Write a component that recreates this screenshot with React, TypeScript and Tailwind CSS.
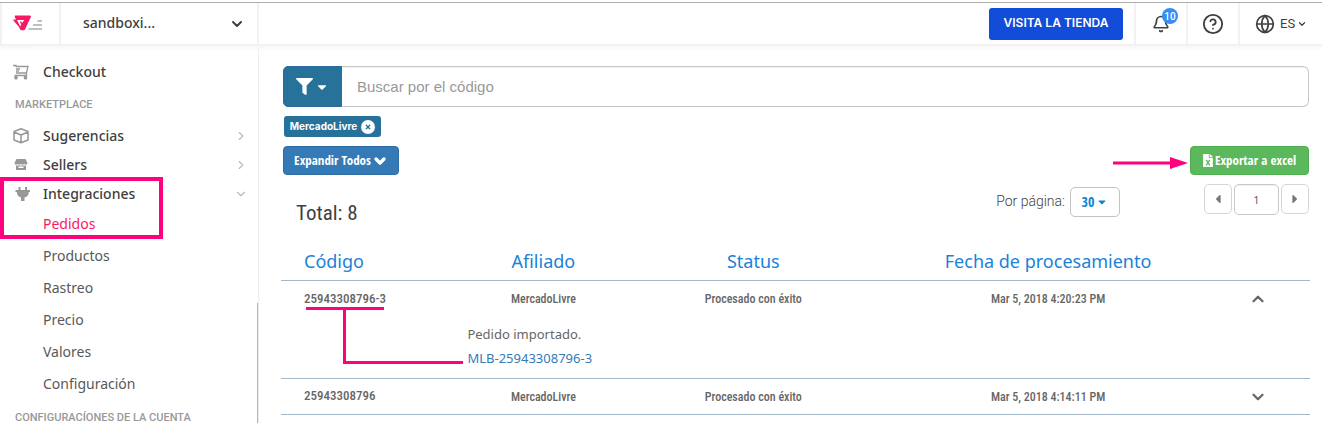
import React from "react";
import { ChevronDown, ChevronUp, ChevronRight, Bell, CircleQuestionMark, Globe } from "lucide-react";
import { FaFilter, FaCaretDown, FaCaretLeft, FaCaretRight, FaFileExcel } from "react-icons/fa";
import { FaCircleXmark } from "react-icons/fa6";

const narrow = "font-['Open_Sans_Condensed','Roboto_Condensed',sans-serif]";
const narrowText = "font-['Roboto_Condensed','Open_Sans_Condensed',sans-serif]";

function Logo() {
  return (
    <svg viewBox="0 0 30 16" className="h-4 w-[30px]" aria-hidden="true">
      <path
        fillRule="evenodd"
        d="M2.500 0.500H16.700q1.800 0 1 1.700L12.200 14q-.7 1.300-1.500 1.300H8.500q-1 0-1.600-1.200L6 12 .4 5.600Q-.2 4.500 1 4.500h2L1.800 2Q1.400.7 2.500.5ZM4 5 7.200 11.500 8.200 9.500 6.800 6.500 8.200 6.500 9 8 11.300 5Z"
        fill="#f71963"
      />
      <path d="M24.500 6h4.500M20 10h9M15.500 14h13.500" stroke="#aaa" strokeWidth="1.500" fill="none" />
    </svg>
  );
}

function CartIcon() {
  return (
    <svg viewBox="0 0 16 16" className="size-4" fill="none" stroke="#979899" strokeWidth="1.300" aria-hidden="true">
      <path d="M0 1.500h3V3M3 2.500H15L13.500 9H3M13.500 9v2.500H1.500M3 5h4M3 7h3" />
      <circle cx="3" cy="13.700" r="1.200" fill="#979899" />
      <circle cx="12.500" cy="13.700" r="1.200" fill="#979899" />
    </svg>
  );
}

function BoxIcon() {
  return (
    <svg viewBox="0 0 16 16" className="size-4" fill="none" stroke="#979899" strokeWidth="1.500" strokeLinejoin="round" aria-hidden="true">
      <path d="M8 .8 15 3.500v8.500L8 14.800 1 12V3.500ZM1 4l7 3 7-3M8 7v8" />
    </svg>
  );
}

function StoreIcon() {
  return (
    <svg viewBox="0 0 14 13" className="ml-px h-[13px] w-3.5" fill="#979899" aria-hidden="true">
      <path d="M2.500 1h9L13.500 5q0 1.800-1.600 1.800-1.100 0-1.600-1-.6 1-1.700 1T7 5.800q-.6 1-1.700 1t-1.600-1q-.5 1-1.600 1Q.5 6.800.5 5Z" />
      <path fillRule="evenodd" d="M2 7.500h10V12H2ZM4.500 8.500v1.500h5V8.500Z" />
    </svg>
  );
}

function PlugIcon() {
  return (
    <svg viewBox="0 0 16 16" className="ml-0.5 size-4" fill="#979899" aria-hidden="true">
      <path d="M3.500 1h2v3h4.500V1h2v3H15v2h-1.200q0 4.500-4.300 5.500V15h-3.500v-3.500Q2 10.500 1.800 6H.5V4h3Z" />
    </svg>
  );
}

const heading = "px-[15px] text-[11px] leading-4 font-medium text-[#979899] whitespace-nowrap font-[Roboto,sans-serif]";

function MenuLink({ icon, label, arrow }: { icon: React.ReactNode; label: string; arrow?: "right" | "down" }) {
  return (
    <a href="#" className="flex h-[29px] items-center pr-2.5 pl-[13px] text-sm font-medium text-[#3f3f40]">
      <span className="flex w-[30px] items-center">{icon}</span>
      <span className="flex-1">{label}</span>
      {arrow === "right" && <ChevronRight className="size-3.5 text-[#bbb]" strokeWidth={2} />}
      {arrow === "down" && <ChevronDown className="size-3.5 text-[#bbb]" strokeWidth={2} />}
    </a>
  );
}

function Sidebar() {
  return (
    <nav className="relative w-[259px] shrink-0 overflow-hidden border-r border-[#eee] font-['Noto_Sans',sans-serif]">
      <div className="flex h-[11px] items-start px-3.5">
        <svg viewBox="0 0 16 2" className="h-0.5 w-4" aria-hidden="true">
          <path d="M0 .5h3M5 .5h10" stroke="#979899" />
        </svg>
      </div>
      <MenuLink icon={<CartIcon />} label="Checkout" />
      <h2 className={`${heading} mt-[11px] mb-2`}>MARKETPLACE</h2>
      <MenuLink icon={<BoxIcon />} label="Sugerencias" arrow="right" />
      <MenuLink icon={<StoreIcon />} label="Sellers" arrow="right" />
      <div className="relative">
        <MenuLink icon={<PlugIcon />} label="Integraciones" arrow="down" />
        <a href="#" className="flex h-8 items-center pl-[43px] text-sm text-[#f71963]">Pedidos</a>
        <div className="pointer-events-none absolute -top-0.5 left-0 h-[62px] w-[163px] border-4 border-[#ff007f]" />
      </div>
      {["Productos", "Rastreo", "Precio", "Valores", "Configuración"].map((t) => (
        <a key={t} href="#" className="flex h-8 items-center pl-[43px] text-sm text-[#585959]">
          {t}
        </a>
      ))}
      <h2 className={`${heading} mt-2.5`}>CONFIGURACÍONES DE LA CUENTA</h2>
      <div className="absolute right-0 bottom-0 h-[120px] w-px bg-[#b5b5b5]" />
    </nav>
  );
}

function Header() {
  return (
    <header className="relative z-10 mt-0.5 flex h-11 shrink-0 items-stretch border-t border-b-2 border-t-[#b0b0b0] border-b-[#f2f2f3] bg-white shadow-[0_3px_3px_#f8f8f8]">
      <a href="#" aria-label="Inicio" className="flex w-[61px] items-center border-x-2 border-[#f2f2f3] pb-px pl-[11px]">
        <Logo />
      </a>
      <button className="flex w-[198px] items-center justify-between border-r-2 border-[#f2f2f3] pr-3 pl-[22px] text-sm font-medium text-[#3f3f40] font-['Noto_Sans',sans-serif]">
        <span className="pb-0.5">sandboxi...</span>
        <ChevronDown className="size-4" strokeWidth={3} />
      </button>
      <div className="flex flex-1 items-center justify-end pr-[11px]">
        <button className="h-8 w-[134px] rounded-[3px] bg-[#134cd8] pb-0.5 text-xs font-semibold whitespace-nowrap text-white font-[Inter,sans-serif]">
          VISITA LA TIENDA
        </button>
      </div>
      <button aria-label="Notificaciones" className="relative flex w-[52px] items-center justify-center border-l-2 border-[#f2f2f3] text-[#3f3f40]">
        <Bell className="size-[18px]" strokeWidth={2.3} />
        <span className="absolute top-[5px] left-[26px] flex size-4 items-center justify-center rounded-full bg-[#368df7] text-[10px] font-medium text-white font-[Roboto,sans-serif]">
          10
        </span>
      </button>
      <button aria-label="Ayuda" className="flex w-[52px] items-center justify-center border-l-2 border-[#f2f2f3] text-[#3f3f40]">
        <CircleQuestionMark className="size-[22px]" strokeWidth={2} />
      </button>
      <button className="flex w-[84px] items-center border-l-2 border-[#f2f2f3] pl-[15px] text-[13px] text-[#3f3f40] font-[Roboto,sans-serif]">
        <Globe className="size-5" strokeWidth={2} />
        <span className="ml-[5px]">ES</span>
        <ChevronDown className="ml-0.5 size-2.5" strokeWidth={3} />
      </button>
    </header>
  );
}

const orders = [
  { code: "25943308796-3", date: "Mar 5, 2018 4:20:23 PM", open: true },
  { code: "25943308796", date: "Mar 5, 2018 4:14:11 PM", open: false },
];

function OrdersTable() {
  const th = "h-9 p-0 pb-0.5 text-lg font-normal text-[#1a82d9] font-['Noto_Sans',sans-serif]";
  const td = "h-9 p-0 pt-0.5 text-center align-middle text-xs";
  return (
    <table className="mt-[15px] w-full table-fixed border-collapse">
      <colgroup>
        <col className="w-[15.3%]" />
        <col className="w-[20.4%]" />
        <col className="w-[20.4%]" />
        <col className="w-[36.9%]" />
        <col className="w-[7%]" />
      </colgroup>
      <thead>
        <tr className="border-b border-[#a3b8c8]">
          <th scope="col" className={`${th} pl-[23px] text-left`}>Código</th>
          <th scope="col" className={th}>Afiliado</th>
          <th scope="col" className={th}>Status</th>
          <th scope="col" className={th}>Fecha de procesamiento</th>
          <td />
        </tr>
      </thead>
      {orders.map((o) => (
        <tbody key={o.code} className={`border-b border-[#a3b8c8] font-medium text-[#666] ${narrowText}`}>
          <tr>
            <td className="relative h-9 p-0 pl-[23px] text-left text-[13px]">
              {o.code}
              {o.open && (
                <svg viewBox="0 0 158 60" className="pointer-events-none absolute top-[26px] left-[25px] h-[60px] w-[158px]" aria-hidden="true">
                  <path d="M0 1.500H78M38.500 1.500V55.500H157" stroke="#ff007f" strokeWidth="3" fill="none" />
                </svg>
              )}
            </td>
            <td className={td}>MercadoLivre</td>
            <td className={td}>Procesado con éxito</td>
            <td className={td}>{o.date}</td>
            <td className="h-9 p-0 pr-8 text-center">
              <button aria-label={o.open ? "Contraer" : "Expandir"} className="inline-flex align-middle">
                {o.open ? <ChevronUp className="size-[18px]" strokeWidth={3} /> : <ChevronDown className="size-[18px]" strokeWidth={3} />}
              </button>
            </td>
          </tr>
          {o.open && (
            <tr>
              <td />
              <td colSpan={4} className="h-[62px] p-0 pl-[29px] align-top text-[13px] leading-6 font-normal font-['Noto_Sans',sans-serif]">
                <p className="mt-1.5">Pedido importado.</p>
                <a href="#" className="text-[#337ab7]">MLB-25943308796-3</a>
              </td>
            </tr>
          )}
        </tbody>
      ))}
    </table>
  );
}

export default function App() {
  return (
    <div className="flex h-screen flex-col overflow-hidden bg-white font-['Liberation_Sans',sans-serif]">
      <Header />
      <div className="flex min-h-0 flex-1">
        <Sidebar />
        <main className="min-w-0 flex-1 pt-5 pr-3 pl-[22px]">
          <div className="flex h-[41px] pr-px pl-0.5">
            <button aria-label="Filtrar" className="flex w-[59px] items-center justify-center gap-0.5 rounded-l-[5px] border border-[#2b6a9c] bg-[#26729a] text-white">
              <FaFilter className="size-[17px]" />
              <FaCaretDown className="size-3.5" />
            </button>
            <input
              aria-label="Buscar por el código"
              placeholder="Buscar por el código"
              className="min-w-0 flex-1 rounded-r-[6px] border border-l-0 border-[#c8c8c8] px-[15px] pt-0.5 text-[15px] inset-shadow-2xs outline-none placeholder:text-[#999]"
            />
          </div>
          <button className="mt-[9px] ml-[3px] flex h-[21px] w-[97px] items-center justify-center gap-1 rounded-[3px] bg-[#26729a] text-[10px] font-bold text-white font-[Inter,sans-serif]">
            MercadoLivre
            <FaCircleXmark className="size-3.5 shrink-0" />
          </button>
          <div className="mt-[9px] flex items-center justify-between pr-px pl-0.5">
            <button className={`flex h-[29px] w-[116px] items-center justify-center gap-px rounded-[4px] border border-[#2e6da4] bg-[#337ab7] text-[13px] font-bold whitespace-nowrap text-white ${narrow}`}>
              Expandir Todos
              <ChevronDown className="size-4" strokeWidth={5} />
            </button>
            <div className="flex items-center gap-0.5">
              <svg viewBox="0 0 75 12" className="mt-1 h-3 w-[75px]" aria-hidden="true">
                <path d="M0 4.500H58V7.500H0ZM57 0 75 6 57 12Z" fill="#ff007f" />
              </svg>
              <button className={`flex h-[29px] w-[119px] items-center justify-center gap-0.5 rounded-[4px] border border-[#4cae4c] bg-[#5cb85c] text-[13px] font-bold whitespace-nowrap text-white ${narrow}`}>
                <FaFileExcel className="h-[13px] w-2.5" />
                Exportar a excel
              </button>
            </div>
          </div>
          <div className="mt-2 flex items-start pr-px">
            <h1 className={`mt-3.5 ml-[15px] flex-1 text-[21px] leading-8 font-normal text-[#3f3f40] ${narrowText}`}>Total: 8</h1>
            <span className="mt-2 text-sm leading-5 text-[#3f3f40] font-light font-[Roboto,sans-serif]">Por página:</span>
            <button className={`mt-1 ml-[5px] flex h-[30px] w-[50px] items-center justify-center gap-0.5 rounded-[5px] border border-[#c4c4c4] text-sm font-bold text-[#0b87cf] ${narrow}`}>
              30
              <FaCaretDown className="size-3" />
            </button>
            <div className="mt-px ml-[84px] flex gap-0.5">
              <button aria-label="Página anterior" className="flex h-[30px] w-7 items-center justify-center rounded-[5px] border border-[#d5d5d5] text-[#777]">
                <FaCaretLeft className="size-3.5" />
              </button>
              <input
                aria-label="Página"
                defaultValue="1"
                className="h-[31px] w-[45px] rounded-[5px] border border-[#c8c8c8] text-center text-[11px] text-[#555] inset-shadow-2xs outline-none font-['Open_Sans',sans-serif]"
              />
              <button aria-label="Página siguiente" className="flex h-[30px] w-7 items-center justify-center rounded-[5px] border border-[#d5d5d5] text-[#777]">
                <FaCaretRight className="size-3.5" />
              </button>
            </div>
          </div>
          <OrdersTable />
        </main>
      </div>
    </div>
  );
}
